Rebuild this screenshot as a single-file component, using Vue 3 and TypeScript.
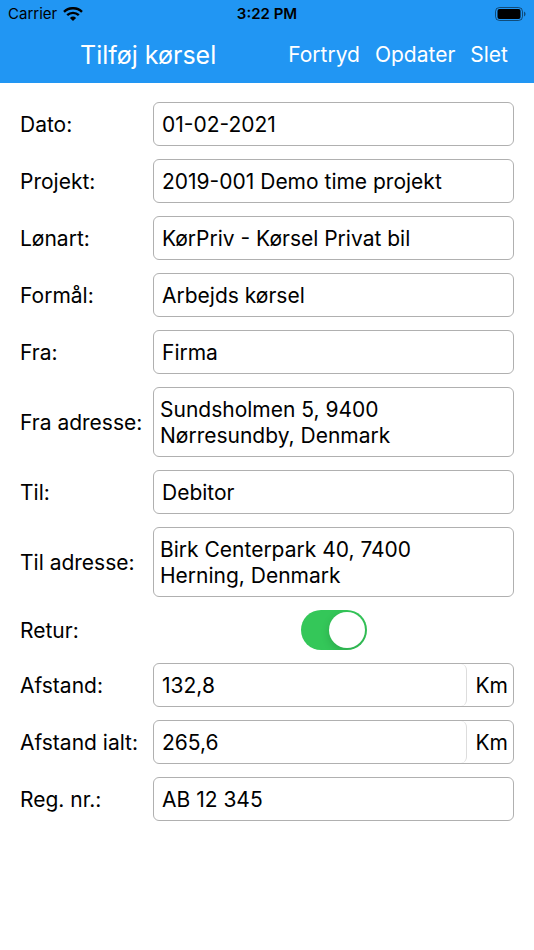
<script setup lang="ts">
import { ref } from 'vue'

interface Field {
  id: string
  label: string
  value: string
  multiline?: boolean
  unit?: string
}

const before = ref<Field[]>([
  { id: 'dato', label: 'Dato:', value: '01-02-2021' },
  { id: 'projekt', label: 'Projekt:', value: '2019-001 Demo time projekt' },
  { id: 'lonart', label: 'Lønart:', value: 'KørPriv - Kørsel Privat bil' },
  { id: 'formaal', label: 'Formål:', value: 'Arbejds kørsel' },
  { id: 'fra', label: 'Fra:', value: 'Firma' },
  { id: 'fra-adresse', label: 'Fra adresse:', value: 'Sundsholmen 5, 9400\nNørresundby, Denmark', multiline: true },
  { id: 'til', label: 'Til:', value: 'Debitor' },
  { id: 'til-adresse', label: 'Til adresse:', value: 'Birk Centerpark 40, 7400\nHerning, Denmark', multiline: true },
])

const after = ref<Field[]>([
  { id: 'afstand', label: 'Afstand:', value: '132,8', unit: 'Km' },
  { id: 'afstand-ialt', label: 'Afstand ialt:', value: '265,6', unit: 'Km' },
  { id: 'reg', label: 'Reg. nr.:', value: 'AB 12 345' },
])

const retur = ref(true)
</script>

<template>
  <div class="screen">
    <header class="top">
      <div class="status">
        <div class="carrier">
          <span>Carrier</span>
          <svg class="wifi" width="20" height="14" viewBox="0 0 20 14" aria-hidden="true">
            <path d="M1 4.8a13 13 0 0 1 18 0" />
            <path d="M4.2 8.2a8.5 8.5 0 0 1 11.6 0" />
            <path class="dot" d="M6.9 10.9a4.6 4.6 0 0 1 6.2 0L10 14z" />
          </svg>
        </div>
        <span class="clock">3:22 PM</span>
        <svg class="battery" width="31" height="14" viewBox="0 0 31 14" aria-hidden="true">
          <rect class="shell" x="0.5" y="0.5" width="27" height="13" rx="4" />
          <rect x="2.5" y="2" width="23" height="10" rx="2" />
          <path class="cap" d="M29 4.5c2 .8 2 4.2 0 5z" />
        </svg>
      </div>
      <nav class="bar">
        <h1>Tilføj kørsel</h1>
        <div class="actions">
          <button type="button">Fortryd</button>
          <button type="button">Opdater</button>
          <button type="button">Slet</button>
        </div>
      </nav>
    </header>

    <form class="form" @submit.prevent>
      <div v-for="f in before" :key="f.id" class="row">
        <label :for="f.id">{{ f.label }}</label>
        <textarea v-if="f.multiline" :id="f.id" v-model="f.value" class="box" rows="2"></textarea>
        <input v-else :id="f.id" v-model="f.value" class="box" type="text" />
      </div>
      <div class="row">
        <label for="retur">Retur:</label>
        <input id="retur" v-model="retur" class="switch" type="checkbox" role="switch" />
      </div>
      <div v-for="f in after" :key="f.id" class="row">
        <label :for="f.id">{{ f.label }}</label>
        <div v-if="f.unit" class="box measure">
          <input :id="f.id" v-model="f.value" type="text" inputmode="decimal" />
          <span>{{ f.unit }}</span>
        </div>
        <input v-else :id="f.id" v-model="f.value" class="box" type="text" />
      </div>
    </form>
  </div>
</template>

<style>
body {
  background: #fff;
}
</style>

<style scoped>
.screen {
  min-height: 100vh;
  color: #000;
  font-family: Inter, 'Liberation Sans', sans-serif;
  font-size: 21px;
  line-height: 26px;
}

.screen * {
  box-sizing: border-box;
}

.top {
  background: #2196f3;
}

.status {
  display: grid;
  grid-template-columns: 1fr auto 1fr;
  align-items: center;
  height: 27px;
  padding: 0 8px;
  font-size: 15px;
  line-height: 20px;
}

.carrier {
  display: flex;
  align-items: center;
  gap: 6px;
}

.wifi path {
  fill: none;
  stroke: #000;
  stroke-width: 2.4;
}

.wifi .dot {
  fill: #000;
  stroke: none;
}

.clock {
  font-weight: 600;
}

.battery {
  justify-self: end;
}

.battery .shell {
  fill: none;
  stroke: #000;
  stroke-opacity: 0.5;
}

.battery .cap {
  fill-opacity: 0.5;
}

.bar {
  display: flex;
  align-items: center;
  justify-content: space-between;
  height: 56px;
  padding: 0 26px 0 80px;
  color: #fff;
}

h1 {
  margin: 0;
  font-size: 25px;
  font-weight: 400;
  line-height: 32px;
}

.actions {
  display: flex;
  gap: 15px;
}

button {
  padding: 0;
  border: 0;
  background: none;
  color: inherit;
  font: inherit;
}

.form {
  display: flex;
  flex-direction: column;
  gap: 13px;
  padding: 19px 20px;
}

.row {
  display: grid;
  grid-template-columns: 121px 1fr;
  column-gap: 12px;
  align-items: center;
}

label {
  padding-top: 2px;
  white-space: nowrap;
}

.box {
  display: block;
  width: 100%;
  min-width: 0;
  height: 44px;
  margin: 0;
  padding: 0 8px;
  border: 1px solid #b0b0b0;
  border-radius: 6px;
  background: #fff;
  color: inherit;
  font: inherit;
  outline: none;
}

textarea.box {
  height: 70px;
  padding: 9px 6px 7px;
  resize: none;
  overflow: hidden;
}

.measure {
  display: flex;
  align-items: center;
  padding: 0 5px 0 0;
}

.measure input {
  flex: 1;
  min-width: 0;
  height: 42px;
  padding: 0 8px;
  border: 0;
  border-right: 1px solid #ddd;
  border-radius: 6px;
  background: none;
  color: inherit;
  font: inherit;
  outline: none;
}

.measure span {
  padding: 2px 0 0 8px;
}

.switch {
  appearance: none;
  justify-self: center;
  width: 66px;
  height: 40px;
  margin: 0;
  padding: 2px;
  border-radius: 20px;
  background: #e9e9ea;
  overflow: hidden;
}

.switch::before {
  content: '';
  display: block;
  width: 36px;
  height: 36px;
  border-radius: 50%;
  background: #fff;
  box-shadow: 0 3px 8px rgb(0 0 0 / 15%);
}

.switch:checked {
  background: #34c759;
}

.switch:checked::before {
  margin-left: auto;
}
</style>
